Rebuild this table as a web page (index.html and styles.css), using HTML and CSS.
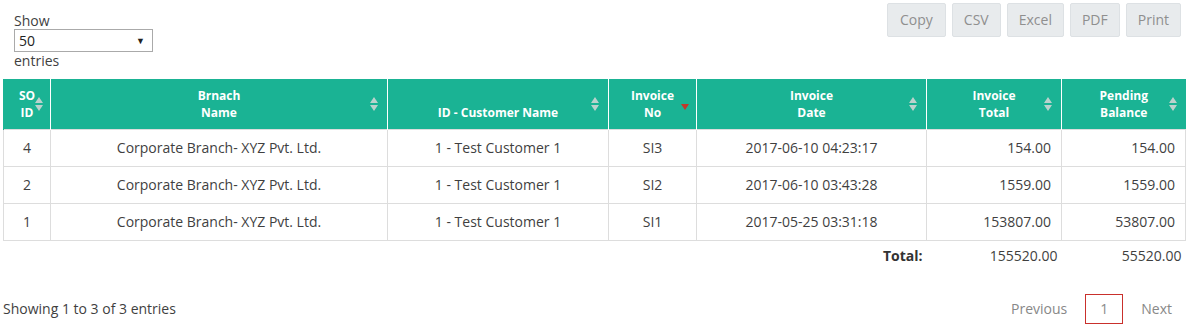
FILE: index.html
```html
<!DOCTYPE html>
<html>
<head>
<meta charset="utf-8">
<link rel="stylesheet" href="styles.css">
</head>
<body>
<div class="wrap">
  <div class="top">
    <div class="length">
      <div class="lbl">Show</div>
      <div class="select"><span>50</span><span class="arrow">&#9660;</span></div>
      <div class="lbl">entries</div>
    </div>
    <div class="buttons">
      <span class="btn">Copy</span>
      <span class="btn">CSV</span>
      <span class="btn">Excel</span>
      <span class="btn">PDF</span>
      <span class="btn">Print</span>
    </div>
  </div>
  <table class="grid">
    <colgroup>
      <col class="c1"><col class="c2"><col class="c3"><col class="c4"><col class="c5"><col class="c6"><col class="c7">
    </colgroup>
    <thead>
      <tr>
        <th><span class="so">SO<br>ID</span><i class="sort s-so"></i></th>
        <th>Brnach<br>Name<i class="sort"></i></th>
        <th>ID - Customer Name<i class="sort"></i></th>
        <th>Invoice<br>No<i class="desc"></i></th>
        <th>Invoice<br>Date<i class="sort"></i></th>
        <th>Invoice<br>Total<i class="sort"></i></th>
        <th>Pending<br>Balance<i class="sort"></i></th>
      </tr>
    </thead>
    <tbody>
      <tr><td>4</td><td>Corporate Branch- XYZ Pvt. Ltd.</td><td>1 - Test Customer 1</td><td>SI3</td><td>2017-06-10 04:23:17</td><td class="num">154.00</td><td class="num">154.00</td></tr>
      <tr><td>2</td><td>Corporate Branch- XYZ Pvt. Ltd.</td><td>1 - Test Customer 1</td><td>SI2</td><td>2017-06-10 03:43:28</td><td class="num">1559.00</td><td class="num">1559.00</td></tr>
      <tr><td>1</td><td>Corporate Branch- XYZ Pvt. Ltd.</td><td>1 - Test Customer 1</td><td>SI1</td><td>2017-05-25 03:31:18</td><td class="num">153807.00</td><td class="num">53807.00</td></tr>
    </tbody>
    <tfoot>
      <tr><td></td><td></td><td></td><td></td><td class="tot">Total:</td><td>155520.00</td><td>55520.00</td></tr>
    </tfoot>
  </table>
  <div class="bottom">
    <div class="info">Showing 1 to 3 of 3 entries</div>
    <div class="pager">
      <span class="pg">Previous</span>
      <span class="pg cur">1</span>
      <span class="pg last">Next</span>
    </div>
  </div>
</div>
</body>
</html>
```
FILE: styles.css
```css
html, body { margin: 0; padding: 0; background: #fff; }
body { font-family: "Open Sans", "Liberation Sans", sans-serif; font-size: 14px; color: #3f3f3f; }
.wrap { padding: 3px 3px 0 3px; width: 1182px; }
.top { display: flex; justify-content: space-between; align-items: flex-start; height: 76px; }
.length { padding: 9px 0 0 11px; line-height: 17px; }
.lbl { color: #3f3f3f; }
.select { height: 21px; border: 1px solid #aaa; display: flex; justify-content: space-between; align-items: center; padding: 0 0 0 4px; box-sizing: content-box; width: 133px; color: #222; }
.select .arrow { font-size: 9px; color: #222; padding-right: 7px; }
.buttons { display: flex; gap: 6px; margin-right: 4px; }
.btn { display: inline-block; height: 32px; line-height: 32px; padding: 0 11px; background: #e8ebed; border: 1px solid #dde1e4; color: #8f8f8f; border-radius: 2px; }
.btn:first-child { padding: 0 12px; }
.grid { width: 1182px; border-collapse: collapse; table-layout: fixed; }
.c1 { width: 47px; } .c2 { width: 337px; } .c3 { width: 221px; } .c4 { width: 88px; } .c5 { width: 230px; } .c6 { width: 135px; } .c7 { width: 124px; }
.grid thead th { background: #1ab394; color: #fff; font-size: 12px; font-weight: 700; line-height: 17px; height: 50px; box-sizing: border-box; padding: 8px 4px; vertical-align: bottom; text-align: center; border-left: 1px solid #fff; position: relative; }
.grid thead th:first-child { border-left: 1px solid #1ab394; }
.sort, .desc { position: absolute; right: 8px; top: 18px; width: 9px; height: 14px; }
.sort::before, .sort::after { content: ""; position: absolute; left: 0; border-left: 4.5px solid transparent; border-right: 4.5px solid transparent; }
.sort::before { top: 0; border-bottom: 6px solid rgba(215,215,215,0.85); }
.sort::after { bottom: 0; border-top: 6px solid rgba(215,215,215,0.85); }
.s-so { right: 6px; }
.desc { top: 25px; right: 6px; }
.desc::after { content: ""; position: absolute; left: 0; top: 0; border-left: 4.5px solid transparent; border-right: 4.5px solid transparent; border-top: 6px solid #c0392b; }
.grid tbody td { height: 37px; box-sizing: border-box; border: 1px solid #ddd; text-align: center; padding: 0 10px 1px; color: #3f3f3f; }
.grid tbody td.num { text-align: right; }
.grid tfoot td { height: 28px; text-align: right; padding: 0 4px; color: #3f3f3f; }
.grid tfoot td.tot { font-weight: 700; color: #333; }
.bottom { display: flex; justify-content: space-between; align-items: center; margin-top: 25px; }
.info { padding-bottom: 2px; }
.pager { display: flex; align-items: center; }
.pg { display: inline-block; padding: 5px 18px; color: #888; line-height: 18px; }
.pg.last { padding-right: 13px; }
.pg.cur { border: 1px solid #c9302c; padding: 5px 14px; color: #8a8a8a; }
```
